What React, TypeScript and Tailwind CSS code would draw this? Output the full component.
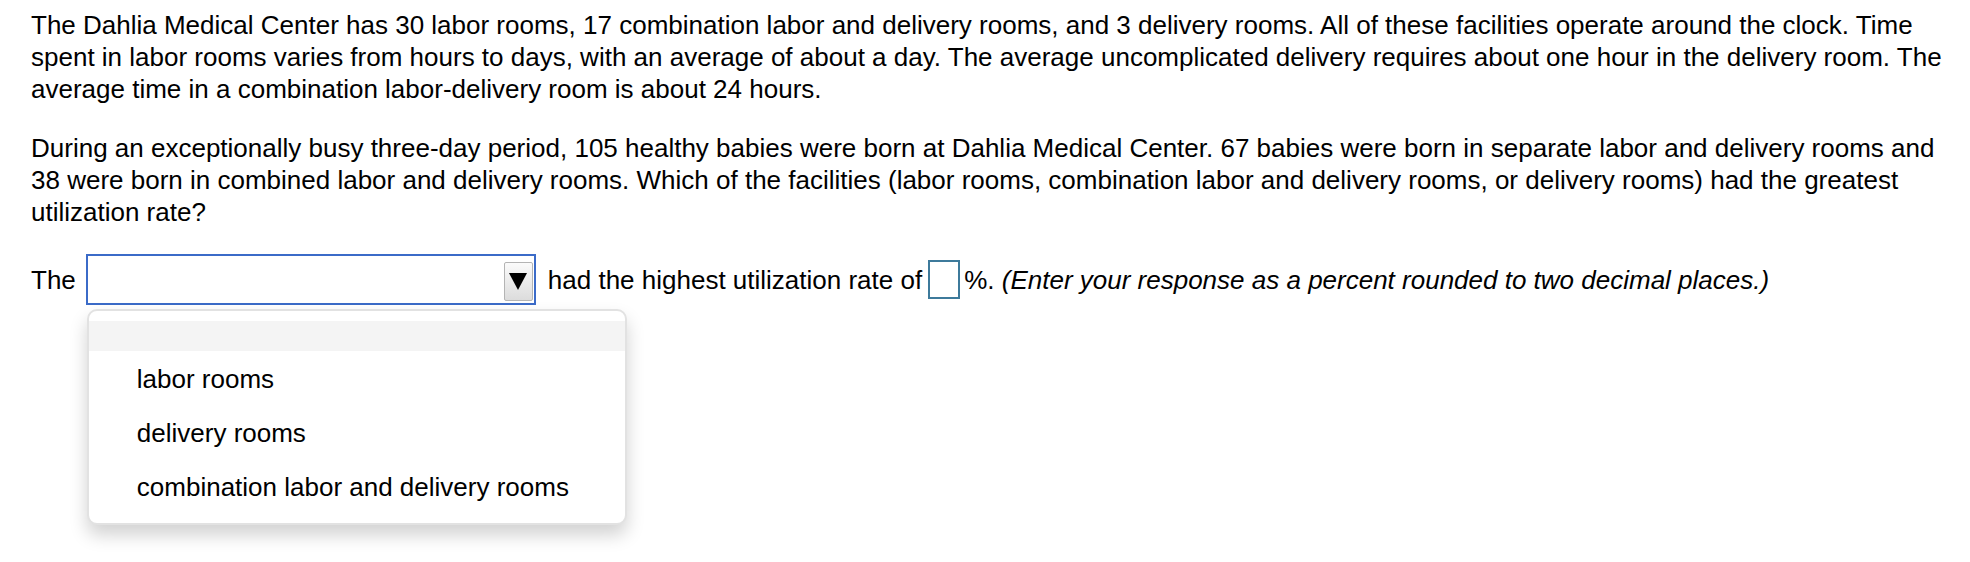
import { useState } from 'react';

const OPTIONS = ['labor rooms', 'delivery rooms', 'combination labor and delivery rooms'];

export default function App() {
  const [selected, setSelected] = useState('');
  const [open, setOpen] = useState(true);
  const [percent, setPercent] = useState('');

  return (
    <div className="min-h-[562px] bg-white pl-[31px] pr-[8px] pt-[9px] text-[26px] leading-[32px] text-black font-['Liberation_Sans',Arial,sans-serif]">
      <p>
        The Dahlia Medical Center has 30 labor rooms, 17 combination labor and delivery rooms, and 3 delivery rooms. All
        of these facilities operate around the clock. Time
        <br />
        spent in labor rooms varies from hours to days, with an average of about a day. The average uncomplicated
        delivery requires about one hour in the delivery room. The
        <br />
        average time in a combination labor-delivery room is about 24 hours.
      </p>
      <p className="mt-[27px]">
        During an exceptionally busy three-day period, 105 healthy babies were born at Dahlia Medical Center. 67 babies
        were born in separate labor and delivery rooms and
        <br />
        38 were born in combined labor and delivery rooms. Which of the facilities (labor rooms, combination labor and
        delivery rooms, or delivery rooms) had the greatest
        <br />
        utilization rate?
      </p>

      <div className="mt-[26px] flex items-center">
        <span>The</span>
        <div className="relative ml-[10px]">
          <button
            onClick={() => setOpen(!open)}
            className="flex h-[51px] w-[450px] items-center justify-between border-2 border-[#3b6bc8] bg-white pl-3 pr-px text-left"
          >
            <span>{selected}</span>
            <span className="mt-[3px] flex h-[39px] w-[29px] items-center justify-center rounded-[2px] border border-[#b4b4b4] bg-gradient-to-b from-[#fbfbfb] to-[#dcdcdc]">
              <svg width="18" height="17" viewBox="0 0 18 17">
                <path d="M0 0H18L9 17Z" fill="#000" />
              </svg>
            </span>
          </button>

          {open && (
            <div className="absolute left-px top-[55px] z-10 w-[540px] rounded-[10px] border-2 border-[#e2e2e2] bg-white pt-[10px] pb-[10px] shadow-[0_10px_18px_rgba(0,0,0,0.18)]">
              <div
                onClick={() => {
                  setSelected('');
                  setOpen(false);
                }}
                className="h-[30px] bg-[#f4f4f4]"
              />
              {OPTIONS.map((opt) => (
                <div
                  key={opt}
                  onClick={() => {
                    setSelected(opt);
                    setOpen(false);
                  }}
                  className="flex h-[54px] cursor-pointer items-center pl-[48px] pt-[2px]"
                >
                  {opt}
                </div>
              ))}
            </div>
          )}
        </div>
        <span className="ml-[12px]">had the highest utilization rate of</span>
        <input
          value={percent}
          onChange={(e) => setPercent(e.target.value)}
          className="ml-[6px] h-[39px] w-[32px] border-2 border-[#3d7a9b] bg-white outline-none"
        />
        <span className="ml-[4px]">
          %. <i>(Enter your response as a percent rounded to two decimal places.)</i>
        </span>
      </div>
    </div>
  );
}
